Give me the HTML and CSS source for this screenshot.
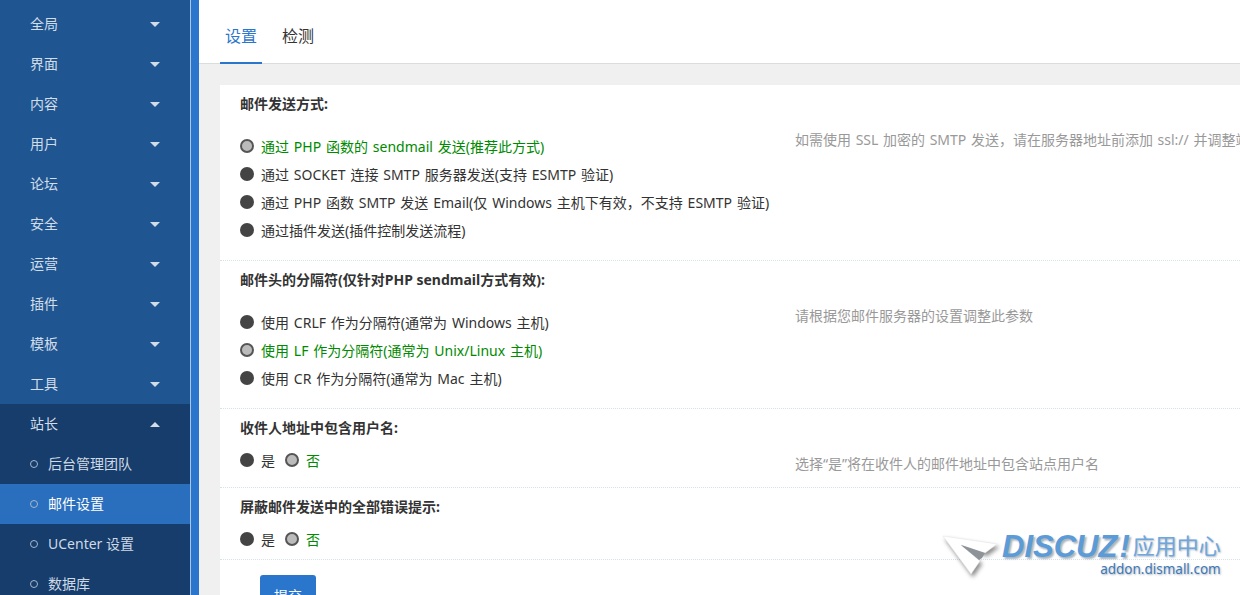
FILE: index.html
```html
<!DOCTYPE html>
<html lang="zh-CN">
<head>
<meta charset="utf-8">
<title>邮件设置</title>
<link rel="stylesheet" href="styles.css">
</head>
<body>
<div class="app">
  <aside class="sidebar">
    <nav class="menu">
      <div class="item"><span>全局</span><i class="caret"></i></div>
      <div class="item"><span>界面</span><i class="caret"></i></div>
      <div class="item"><span>内容</span><i class="caret"></i></div>
      <div class="item"><span>用户</span><i class="caret"></i></div>
      <div class="item"><span>论坛</span><i class="caret"></i></div>
      <div class="item"><span>安全</span><i class="caret"></i></div>
      <div class="item"><span>运营</span><i class="caret"></i></div>
      <div class="item"><span>插件</span><i class="caret"></i></div>
      <div class="item"><span>模板</span><i class="caret"></i></div>
      <div class="item"><span>工具</span><i class="caret"></i></div>
      <div class="group">
        <div class="item"><span>站长</span><i class="caret up"></i></div>
        <div class="sub"><i class="dot"></i><span>后台管理团队</span></div>
        <div class="sub active"><i class="dot"></i><span>邮件设置</span></div>
        <div class="sub"><i class="dot"></i><span>UCenter 设置</span></div>
        <div class="sub"><i class="dot"></i><span>数据库</span></div>
      </div>
    </nav>
  </aside>
  <div class="rail"></div>
  <main class="main">
    <header class="tabs">
      <a class="tab current">设置</a>
      <a class="tab">检测</a>
    </header>
    <div class="content">
      <form class="card">
        <section class="sec first">
          <h3 class="title">邮件发送方式:</h3>
          <div class="body">
            <div class="opts">
              <label class="opt on"><i class="radio"></i>通过 PHP 函数的 sendmail 发送(推荐此方式)</label>
              <label class="opt"><i class="radio"></i>通过 SOCKET 连接 SMTP 服务器发送(支持 ESMTP 验证)</label>
              <label class="opt"><i class="radio"></i>通过 PHP 函数 SMTP 发送 Email(仅 Windows 主机下有效，不支持 ESMTP 验证)</label>
              <label class="opt"><i class="radio"></i>通过插件发送(插件控制发送流程)</label>
            </div>
            <p class="tip t1">如需使用 SSL 加密的 SMTP 发送，请在服务器地址前添加 ssl:// 并调整端口</p>
          </div>
        </section>
        <section class="sec">
          <h3 class="title">邮件头的分隔符(仅针对PHP sendmail方式有效):</h3>
          <div class="body">
            <div class="opts">
              <label class="opt"><i class="radio"></i>使用 CRLF 作为分隔符(通常为 Windows 主机)</label>
              <label class="opt on"><i class="radio"></i>使用 LF 作为分隔符(通常为 Unix/Linux 主机)</label>
              <label class="opt"><i class="radio"></i>使用 CR 作为分隔符(通常为 Mac 主机)</label>
            </div>
            <p class="tip t2">请根据您邮件服务器的设置调整此参数</p>
          </div>
        </section>
        <section class="sec short">
          <h3 class="title">收件人地址中包含用户名:</h3>
          <div class="body">
            <div class="opts inline">
              <label class="opt"><i class="radio"></i>是</label>
              <label class="opt on"><i class="radio"></i>否</label>
            </div>
            <p class="tip t3">选择“是”将在收件人的邮件地址中包含站点用户名</p>
          </div>
        </section>
        <section class="sec short last">
          <h3 class="title">屏蔽邮件发送中的全部错误提示:</h3>
          <div class="body">
            <div class="opts inline">
              <label class="opt"><i class="radio"></i>是</label>
              <label class="opt on"><i class="radio"></i>否</label>
            </div>
          </div>
        </section>
        <div class="actions"><button type="button" class="submit">提交</button></div>
      </form>
    </div>
  </main>
</div>
<div class="watermark">
  <svg class="plane" viewBox="0 0 60 44" width="60" height="44" aria-hidden="true">
    <path class="plane-body" d="M1 2 L55 10 L43 19 L19 11 L38 27 L29 40 Z"/>
    <path class="plane-fold" d="M19 11 L43 19 L40 24 L37 26 Z"/>
  </svg>
  <div class="wm-text">
    <div class="wm-top"><span class="wm-brand">DISCUZ<span class="wm-bang">!</span></span><span class="wm-cn">应用中心</span></div>
    <div class="wm-url">addon.dismall.com</div>
  </div>
</div>
</body>
</html>
```
FILE: styles.css
```css
* { box-sizing: border-box; }
html, body { margin: 0; height: 100%; overflow: hidden; }
body {
  font-family: "Noto Sans", "Noto Sans CJK SC", sans-serif;
  font-size: 14px;
  color: #333;
  background: #f0f0f0;
}
.app { display: flex; height: 595px; overflow: hidden; }

.sidebar {
  width: 190px;
  flex: none;
  background: #1f5691;
  overflow: hidden;
  padding-top: 4px;
}
.rail {
  width: 9px;
  flex: none;
  background: #2b76cd;
  border-left: 1px solid #a9c6e8;
}
.item {
  height: 40px;
  padding: 0 30px;
  display: flex;
  align-items: center;
  justify-content: space-between;
  color: #d3dde9;
}
.item span, .sub span { padding-bottom: 2px; }
.caret {
  width: 0;
  height: 0;
  border-left: 5px solid transparent;
  border-right: 5px solid transparent;
  border-top: 5px solid #d3dde9;
}
.caret.up { border-top: 0; border-bottom: 5px solid #d3dde9; }
.group { background: #163d6b; }
.sub {
  height: 40px;
  padding-left: 30px;
  display: flex;
  align-items: center;
  gap: 10px;
  color: #cfd9e5;
}
.sub.active { background: #2a6fbe; color: #fff; }
.dot {
  width: 8px;
  height: 8px;
  border: 1px solid #a7b7ca;
  border-radius: 50%;
}

.main { flex: 1; min-width: 0; display: flex; flex-direction: column; overflow: hidden; }
.tabs {
  height: 64px;
  flex: none;
  background: #fff;
  border-bottom: 1px solid #dcdcdc;
  display: flex;
  padding-left: 21px;
  gap: 15px;
}
.tab {
  width: 42px;
  height: 64px;
  line-height: 73px;
  text-align: center;
  font-size: 16px;
  color: #333;
}
.tab.current { color: #2b76cd; border-bottom: 2px solid #2b76cd; }

.content { flex: 1; padding: 21px 0 0 21px; min-height: 0; }
.card { background: #fff; height: 100%; }

.sec { border-bottom: 1px dotted #d5e2e8; padding-left: 20px; padding-top: 9px; }
.title { margin: 0; font-size: 14px; font-weight: 700; line-height: 20px; color: #333; }
.body { display: flex; padding-top: 18px; padding-bottom: 16px; }
.short .body { padding-top: 8px; padding-bottom: 13px; }
.last .body { padding-bottom: 6px; }
.opts { width: 555px; flex: none; }
.opts.inline { display: flex; }
.opt { display: flex; align-items: center; height: 28px; white-space: nowrap; color: #333; font-size: 14px; word-spacing: 1.2px; }
.opts.inline .opt { margin-right: 10px; }
.opt.on { color: #008a00; }
.radio {
  width: 14px;
  height: 14px;
  border-radius: 50%;
  background: #444;
  margin-right: 7px;
  flex: none;
}
.opt.on .radio { background: #bbb; border: 2px solid #555; }
.tip { margin: 0; color: #999; font-size: 14px; word-spacing: 1px; line-height: 20px; white-space: nowrap; }
.t1 { margin-top: -2px; }
.t2 { margin-top: -2px; }
.t3 { margin-top: 8px; }

.actions { padding: 15px 0 0 40px; }
.submit {
  width: 56px;
  height: 40px;
  border: 0;
  border-radius: 3px;
  background: #2b76cd;
  color: #fff;
  font: inherit;
  vertical-align: top;
}

.watermark {
  position: absolute;
  left: 942px;
  top: 534px;
  display: flex;
  align-items: flex-start;
}
.plane { overflow: visible; }
.plane-body { fill: #fff; stroke: #e4e7ea; stroke-width: .6; filter: drop-shadow(2px 3px 2px rgba(0, 0, 0, .45)); }
.plane-fold { fill: #8d9398; }
.wm-top { display: flex; align-items: center; height: 26px; white-space: nowrap; }
.wm-brand {
  font-family: "Liberation Sans", sans-serif;
  font-style: italic;
  font-weight: 700;
  font-size: 31px;
  line-height: 26px;
  color: #5b9bd8;
  text-shadow: 2px 2px 2px #aab4bd;
}
.wm-bang { margin: 0 2px; }
.wm-cn { font-size: 22px; line-height: 26px; color: #6ea6de; text-shadow: 1px 1px 2px #aab4bd; margin-left: 1px; padding-bottom: 4px; }
.wm-url { font-size: 13.5px; line-height: 18px; color: #3f78b4; text-align: right; text-shadow: 1px 1px 2px #aab4bd; }
```
